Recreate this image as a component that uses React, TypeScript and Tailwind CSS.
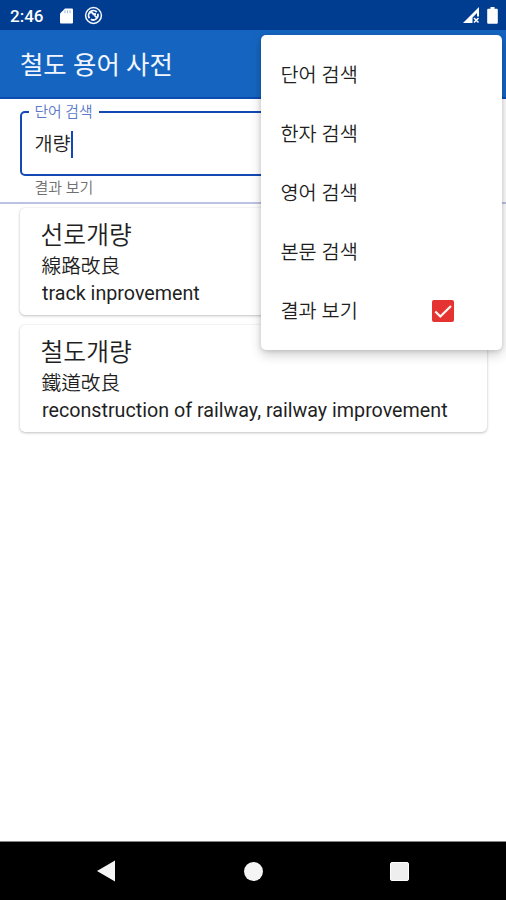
import type { ReactNode } from "react";

const menuItems = ["단어 검색", "한자 검색", "영어 검색", "본문 검색", "결과 보기"];

const entries = [
  { term: "선로개량", hanja: "線路改良", english: "track inprovement" },
  { term: "철도개량", hanja: "鐵道改良", english: "reconstruction of railway, railway improvement" },
];

function StatusBar() {
  return (
    <div className="flex h-[30px] shrink-0 items-center bg-[#003c8f] pl-[10px] pr-[8px] text-white">
      <span className="w-[50px] pt-[2px] text-[17px] leading-none font-medium">2:46</span>
      <svg className="mt-px block" width="13" height="16" viewBox="0 0 13 16">
        <path fill="#fff" d="M5 .5h6.7c.8 0 1.3.5 1.3 1.3v12.4c0 .8-.5 1.3-1.3 1.3H1.3C.5 15.5 0 15 0 14.200V5.500z" />
        <path stroke="#003c8f" strokeOpacity=".35" strokeWidth="1.100" d="M5 2.300v3M7.500 2.300v3M10 2.300v3" />
      </svg>
      <svg className="ml-[11px] block" width="19" height="19" viewBox="0 0 19 19" fill="none" stroke="#f5f7ff">
        <circle cx="9.500" cy="9.500" r="7.900" strokeWidth="1.500" />
        <path strokeWidth="1.800" d="M5.500 12.200A4.800 4.800 0 0 1 12.800 6M13.800 7.800a4.800 4.800 0 0 1-7 5.500" />
        <path strokeWidth="1.800" d="M5 6.500h3l5 5.500M8.500 8.300l3.500-.3" />
      </svg>
      <svg className="mt-[1px] ml-auto block" width="17" height="17" viewBox="0 0 17 17">
        <path fill="#fff" d="M16 0v9.500h-2V6L9.500 10.500V16H0z" />
        <path stroke="#fff" strokeWidth="1.600" d="m11 11 4.500 4.500m0-4.500L11 15.500" />
      </svg>
      <svg className="ml-[7px] mt-[1px] block" width="11" height="17" viewBox="0 0 11 17">
        <path fill="#fff" d="M3.500 0h4v1.700h2c.8 0 1.300.5 1.300 1.300v12.500c0 .8-.5 1.300-1.300 1.300h-8C.7 16.800.2 16.300.2 15.500V3c0-.8.5-1.300 1.300-1.300h2z" />
      </svg>
    </div>
  );
}

function Card({ children }: { children: ReactNode }) {
  return (
    <div className="h-[107px] rounded-[5px] bg-white pt-[10px] pl-[22px] shadow-[0_1px_3px_rgba(0,0,0,0.24),0_0_1px_rgba(0,0,0,0.12)]">
      {children}
    </div>
  );
}

function Menu() {
  return (
    <div className="absolute top-[35px] left-[261px] h-[315px] w-[241px] rounded-[5px] bg-white pt-[10px] shadow-[0_5px_12px_rgba(0,0,0,0.18),0_1px_5px_rgba(0,0,0,0.14)]">
      {menuItems.map((item, i) => (
        <div key={item} className="flex h-[59px] items-center justify-between pr-[48px] pl-[19.5px] text-[19.7px] leading-none">
          <span className="pt-[3px]">{item}</span>
          {i === menuItems.length - 1 && (
            <svg width="22" height="22" viewBox="0 0 22 22">
              <rect width="22" height="22" rx="2" fill="#e53331" />
              <path d="m3.300 11.500 5 5L19 6" fill="none" stroke="#fff5f0" strokeWidth="2.300" />
            </svg>
          )}
        </div>
      ))}
    </div>
  );
}

export default function App() {
  return (
    <div className="relative flex h-[900px] w-[506px] flex-col overflow-hidden bg-white font-[Roboto,'Noto_Sans_CJK_KR',sans-serif] font-[350] text-[#1f1f1f]">
      <StatusBar />
      <header className="flex h-[69px] shrink-0 items-center border-b-2 border-[#0b4cb0] bg-[#1565c0] pl-[20px]">
        <h1 className="pt-[4px] text-[25.4px] leading-none font-normal text-[#f1f5ff]">철도 용어 사전</h1>
      </header>

      <section className="h-[105px] shrink-0 border-b-2 border-[#bcc2e2] px-[19.5px] pt-[4px]">
        <fieldset className="h-[73px] rounded-[5px] border-2 border-[#1348b5] pl-[7px]">
          <legend className="h-[18px] px-[6px] text-[14.8px] leading-[18px] text-[#5b79c9]">단어 검색</legend>
          <div className="flex items-center pt-[8px] pl-[6px]">
            <span className="pt-[2px] text-[19.7px] leading-[28px]">개량</span>
            <span className="h-[27px] w-[2px] bg-[#1348b5]" />
          </div>
        </fieldset>
        <p className="pt-[3px] pl-[15px] text-[15px] leading-[18px] text-[#707070]">결과 보기</p>
      </section>

      <main className="flex flex-1 flex-col gap-[10px] px-[19.5px] pt-[4px]">
        {entries.map((e) => (
          <Card key={e.term}>
            <h2 className="-ml-px text-[24.8px] leading-[36px] font-[350]">{e.term}</h2>
            <p className="text-[19.7px] leading-[25px]">{e.hanja}</p>
            <p className="pl-[0.5px] text-[19.7px] leading-[29px] font-normal whitespace-nowrap">{e.english}</p>
          </Card>
        ))}
      </main>

      <nav className="flex h-[59px] shrink-0 items-center border-t border-[#858585] bg-black pl-[97px]">
        <svg width="18" height="22" viewBox="0 0 18 22">
          <path fill="#f5f5f5" d="M18 .5v21L0 11z" />
        </svg>
        <span className="ml-[129px] size-[19px] rounded-full bg-[#f5f5f5]" />
        <span className="ml-[126.5px] size-[19px] rounded-[2px] border border-white bg-[#eee]" />
      </nav>

      <Menu />
    </div>
  );
}
